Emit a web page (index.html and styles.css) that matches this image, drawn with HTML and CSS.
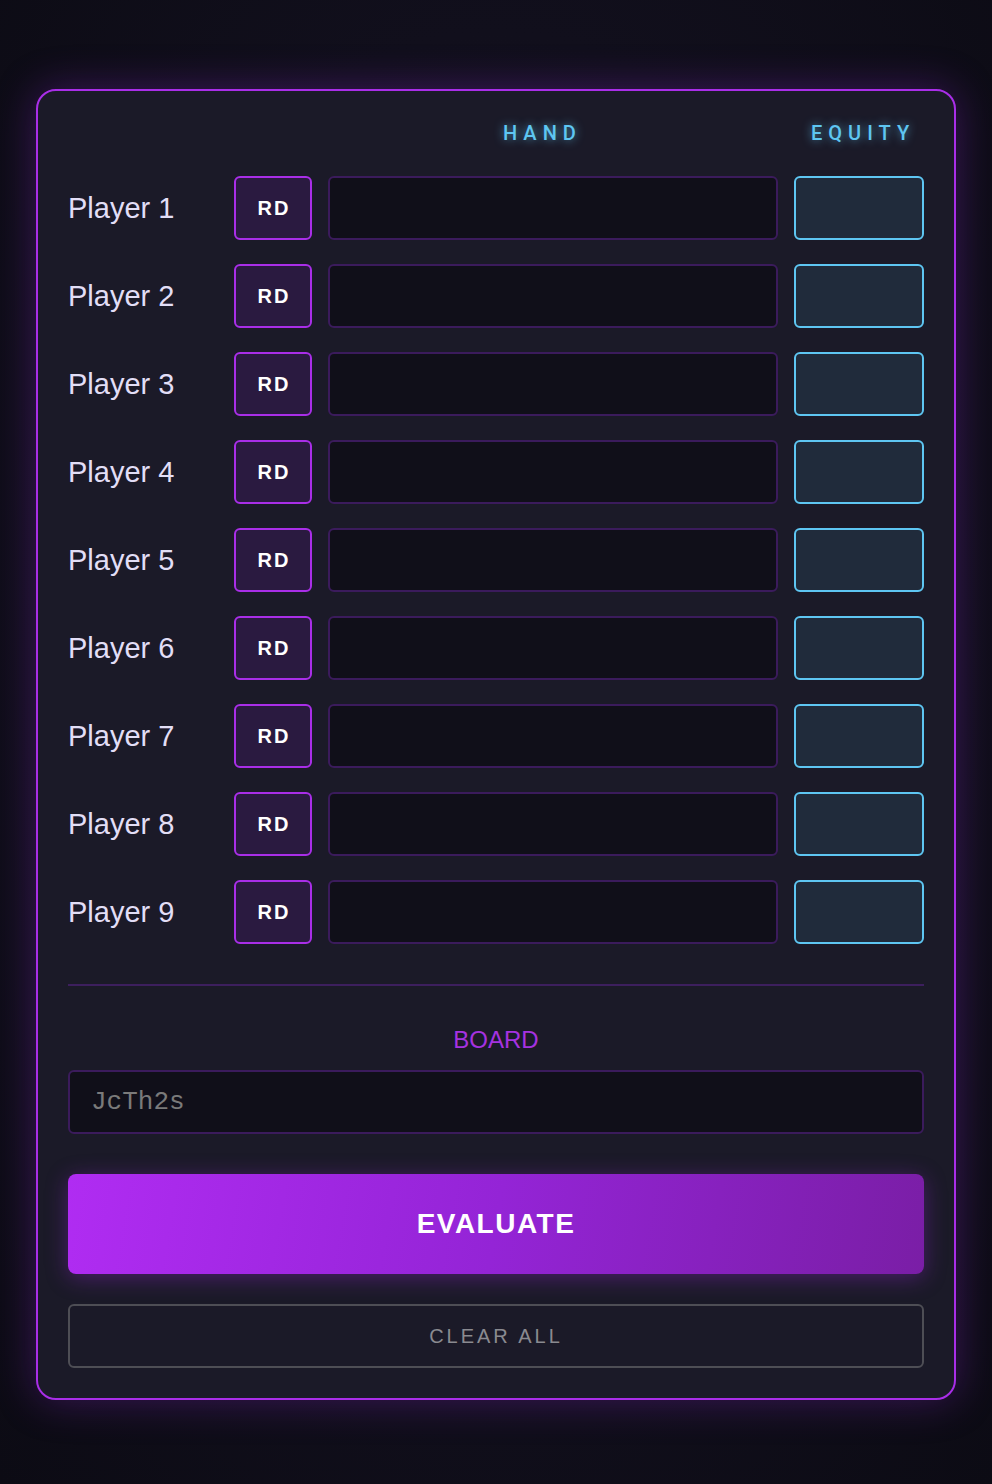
FILE: index.html
```html
<!DOCTYPE html>
<html lang="en">

<head>
    <meta charset="UTF-8">
    <meta name="viewport" content="width=device-width, initial-scale=1.0">
    <title>Equity Calculator</title>
    <link rel="stylesheet" href="styles.css">
</head>

<body>
    <div class="card">
        <div class="head">
            <div></div>
            <div></div>
            <div class="hand-title">HAND</div>
            <div class="eq-title">EQUITY</div>
        </div>
        <div class="rows">
            <div class="row">
                <div class="name">Player 1</div>
                <button class="rd">RD</button>
                <input class="hand" type="text">
                <div class="equity"></div>
            </div>
            <div class="row">
                <div class="name">Player 2</div>
                <button class="rd">RD</button>
                <input class="hand" type="text">
                <div class="equity"></div>
            </div>
            <div class="row">
                <div class="name">Player 3</div>
                <button class="rd">RD</button>
                <input class="hand" type="text">
                <div class="equity"></div>
            </div>
            <div class="row">
                <div class="name">Player 4</div>
                <button class="rd">RD</button>
                <input class="hand" type="text">
                <div class="equity"></div>
            </div>
            <div class="row">
                <div class="name">Player 5</div>
                <button class="rd">RD</button>
                <input class="hand" type="text">
                <div class="equity"></div>
            </div>
            <div class="row">
                <div class="name">Player 6</div>
                <button class="rd">RD</button>
                <input class="hand" type="text">
                <div class="equity"></div>
            </div>
            <div class="row">
                <div class="name">Player 7</div>
                <button class="rd">RD</button>
                <input class="hand" type="text">
                <div class="equity"></div>
            </div>
            <div class="row">
                <div class="name">Player 8</div>
                <button class="rd">RD</button>
                <input class="hand" type="text">
                <div class="equity"></div>
            </div>
            <div class="row">
                <div class="name">Player 9</div>
                <button class="rd">RD</button>
                <input class="hand" type="text">
                <div class="equity"></div>
            </div>
        </div>
        <div class="divider"></div>
        <div class="board-title">BOARD</div>
        <input class="board" type="text" placeholder="JcTh2s">
        <button class="evaluate">EVALUATE</button>
        <button class="clear">CLEAR ALL</button>
    </div>
</body>

</html>
```

FILE: styles.css
```css
* {
    box-sizing: border-box;
}

html {
    background: #0c0b14;
}

body {
    margin: 0;
    padding: 89px 36px 85px;
    min-height: 1484px;
    font-family: "Liberation Sans", Arial, sans-serif;
    background: radial-gradient(ellipse at 50% 45%, #1a1628 0%, #110f1c 55%, #0c0b14 100%);
}

.card {
    width: 920px;
    border: 2px solid #a92ee8;
    border-radius: 20px;
    background: #1b1a28;
    padding: 30px;
    box-shadow: 0 0 40px rgba(140, 40, 210, 0.35);
    display: flex;
    flex-direction: column;
}

.head,
.row {
    display: grid;
    grid-template-columns: 150px 78px 1fr 130px;
    column-gap: 16px;
    align-items: center;
}

.head {
    height: 24px;
    margin-bottom: 31px;
}

.hand-title,
.eq-title {
    font-family: Roboto, "Liberation Sans", sans-serif;
    font-weight: 500;
    font-size: 20px;
    letter-spacing: 6px;
    color: #5ec6f2;
    text-shadow: 0 0 10px rgba(94, 198, 242, 0.75);
    white-space: nowrap;
}

.hand-title {
    padding-left: 175px;
}

.eq-title {
    padding-left: 17px;
}

.rows {
    display: flex;
    flex-direction: column;
    gap: 24px;
}

.row {
    height: 64px;
}

.name {
    font-size: 29px;
    color: #e2def6;
}

.rd {
    height: 64px;
    border: 2px solid #a92ee8;
    border-radius: 6px;
    background: #2a1a40;
    color: #ffffff;
    font-family: "Liberation Sans", Arial, sans-serif;
    font-size: 20px;
    font-weight: bold;
    letter-spacing: 2px;
    padding: 0 0 0 2px;
}

.hand {
    height: 64px;
    width: 100%;
    border: 2px solid #3b1b5c;
    border-radius: 6px;
    background: #100f19;
    outline: none;
}

.equity {
    height: 64px;
    border: 2px solid #5ec6f2;
    border-radius: 6px;
    background: #202b3b;
}

.divider {
    height: 2px;
    background: #3d1f5e;
    margin-top: 40px;
}

.board-title {
    text-align: center;
    font-size: 24px;
    color: #a632e0;
    margin-top: 40px;
    line-height: 28px;
}

.board {
    margin-top: 16px;
    height: 64px;
    width: 100%;
    border: 2px solid #3b1b5c;
    border-radius: 6px;
    background: #100f19;
    padding: 0 21px;
    font-family: "Liberation Mono", "Courier New", monospace;
    font-size: 26px;
    color: #cccccc;
    outline: none;
}

.board::placeholder {
    color: #7a7a7a;
}

.evaluate {
    margin-top: 40px;
    height: 100px;
    border: none;
    border-radius: 8px;
    background: linear-gradient(100deg, #b02cf2 0%, #9424d6 50%, #7a1ea6 100%);
    box-shadow: 0 4px 22px rgba(160, 40, 230, 0.35);
    color: #ffffff;
    font-family: "Liberation Sans", Arial, sans-serif;
    font-size: 28px;
    font-weight: bold;
    letter-spacing: 1.5px;
    padding-bottom: 2px;
}

.clear {
    margin-top: 30px;
    height: 64px;
    border: 2px solid #4e4e55;
    border-radius: 6px;
    background: transparent;
    color: #8a8a90;
    font-family: "Liberation Sans", Arial, sans-serif;
    font-size: 20px;
    letter-spacing: 3px;
}
```
